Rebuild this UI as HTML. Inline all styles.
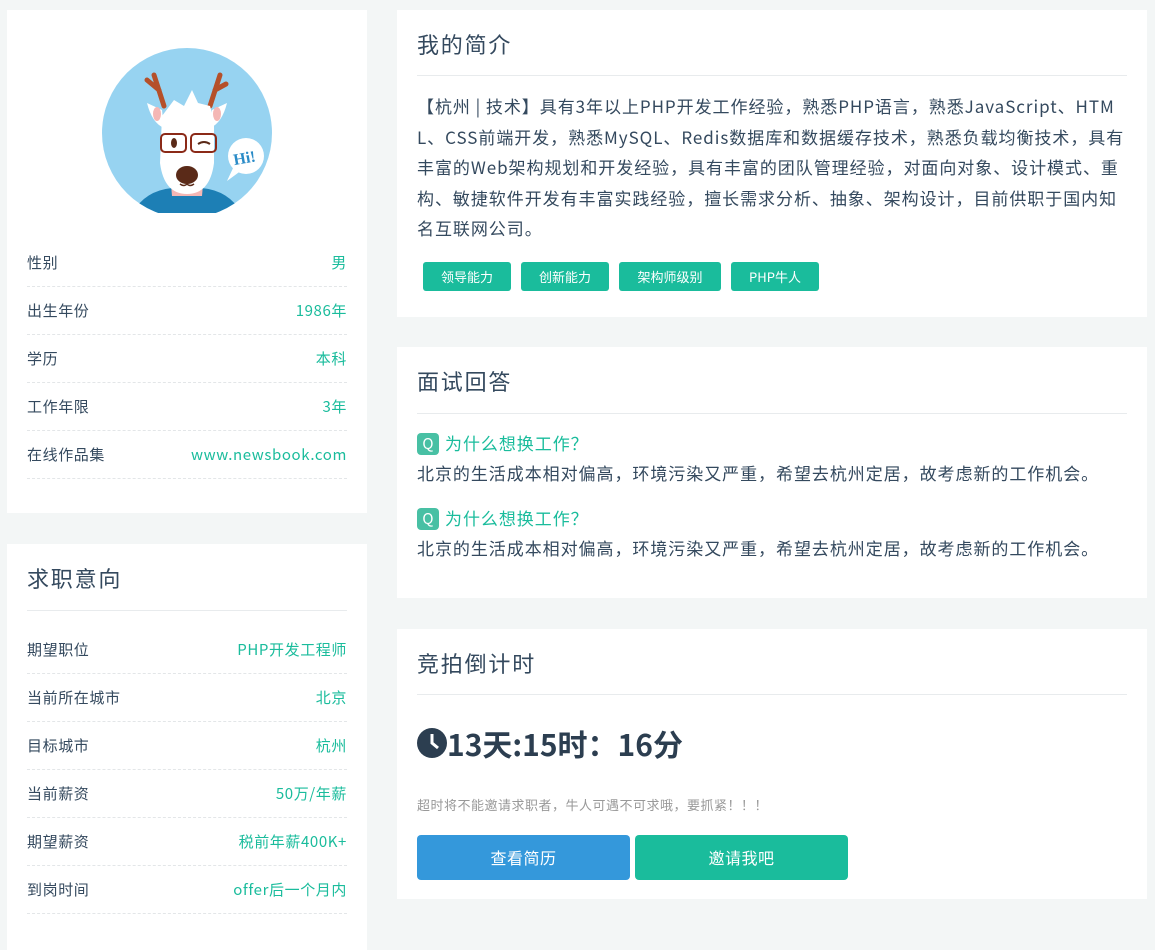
<!DOCTYPE html>
<html><head><meta charset="utf-8"><style>
*{margin:0;padding:0;box-sizing:border-box}
body{width:1155px;height:950px;background:#f3f6f6;font-family:"Noto Sans CJK SC",sans-serif;color:#34495e;position:relative;overflow:hidden}
.card{position:absolute;background:#fff}
.row{position:absolute;left:20px;right:20px;height:48px;border-bottom:1px dashed #e3e6e8;font-size:15px;line-height:48px;display:flex;justify-content:space-between;letter-spacing:0.6px}
.row span:last-child{color:#1abc9c}
.h{position:absolute;left:20px;right:20px;font-size:22px;letter-spacing:1.8px;border-bottom:1px solid #e8ebed}
.tag{display:inline-block;background:#1abc9c;color:#fff;font-size:13px;height:29px;line-height:29px;border-radius:3px;text-align:center;position:absolute;top:252px}
.q{font-size:17px;position:absolute;left:20px;line-height:26px;letter-spacing:0.95px}
.qi{display:inline-block;width:22px;height:22px;background:#48c0a4;color:#fff;border-radius:4px;text-align:center;line-height:22px;font-size:15px;margin-right:6px;vertical-align:1px;letter-spacing:0}
.btn{position:absolute;top:206px;height:45px;line-height:45px;color:#fff;font-size:16px;text-align:center;border-radius:4px;letter-spacing:0.5px}
</style></head><body>
<div class="card" style="left:7px;top:10px;width:360px;height:503px">
<svg style="position:absolute;left:95px;top:38px" width="170" height="165" viewBox="0 0 170 165">
<defs><clipPath id="c"><circle cx="85" cy="85" r="85"/></clipPath></defs>
<circle cx="85" cy="85" r="85" fill="#97d3f1"/>
<g clip-path="url(#c)">
<path d="M28 170 Q40 143 70 140 L100 140 Q130 143 142 170Z" fill="#1d7fb5"/>
<path d="M68 125 L102 125 L100 148 L70 148Z" fill="#f4b7b5"/>
</g>
<path d="M62 58 L52 27 M57 42 L45 32 M108 58 L118 27 M113 42 L124 36" stroke="#b5502a" stroke-width="5" fill="none" stroke-linecap="round"/>
<path d="M60 68 L72 52 L82 58 L90 42 L96 55 L108 58 L112 72 L112 115 Q108 146 85 146 Q62 146 58 115Z" fill="#fff"/>
<path d="M45 55 L60 62 L62 80 Q50 75 45 55Z" fill="#fff"/><path d="M125 55 L110 62 L108 80 Q120 75 125 55Z" fill="#fff"/>
<ellipse cx="55" cy="66" rx="4" ry="7" fill="#f4b7b5"/>
<ellipse cx="115" cy="66" rx="4" ry="7" fill="#f4b7b5"/>
<rect x="59" y="86" width="25" height="18" rx="4" fill="none" stroke="#8b2a18" stroke-width="2"/>
<rect x="89" y="86" width="25" height="18" rx="4" fill="none" stroke="#8b2a18" stroke-width="2"/>
<ellipse cx="72" cy="95" rx="3" ry="5" fill="#5a2a18"/>
<path d="M96 96 Q102 92 108 96" stroke="#5a2a18" stroke-width="2" fill="none"/>
<ellipse cx="85" cy="127" rx="11" ry="9" fill="#5a2a18"/>
<path d="M78 136 Q82 139 85 136 Q88 139 92 136" stroke="#5a2a18" stroke-width="1.5" fill="none"/>
<circle cx="144" cy="108" r="18" fill="#fff"/><path d="M132 118 L125 133 L140 122Z" fill="#fff"/>
<text x="131" y="115" font-family="Liberation Serif" font-weight="bold" font-size="16" fill="#2a8bc7" transform="rotate(-10 144 108)">Hi!</text>
</svg>
<div class="row" style="top:229px"><span>性别</span><span>男</span></div>
<div class="row" style="top:277px"><span>出生年份</span><span>1986年</span></div>
<div class="row" style="top:325px"><span>学历</span><span>本科</span></div>
<div class="row" style="top:373px"><span>工作年限</span><span>3年</span></div>
<div class="row" style="top:421px"><span>在线作品集</span><span>www.newsbook.com</span></div>
</div>
<div class="card" style="left:7px;top:544px;width:360px;height:406px">
<div class="h" style="top:18px;height:49px">求职意向</div>
<div class="row" style="top:82px"><span>期望职位</span><span>PHP开发工程师</span></div>
<div class="row" style="top:130px"><span>当前所在城市</span><span>北京</span></div>
<div class="row" style="top:178px"><span>目标城市</span><span>杭州</span></div>
<div class="row" style="top:226px"><span>当前薪资</span><span>50万/年薪</span></div>
<div class="row" style="top:274px"><span>期望薪资</span><span>税前年薪400K+</span></div>
<div class="row" style="top:322px"><span>到岗时间</span><span>offer后一个月内</span></div>
</div>
<div class="card" style="left:397px;top:10px;width:750px;height:307px">
<div class="h" style="top:18px;height:48px">我的简介</div>
<div style="position:absolute;left:20px;right:18px;top:81px;font-size:17px;line-height:30.5px;word-break:break-all;letter-spacing:0.95px">【杭州 | 技术】具有3年以上PHP开发工作经验，熟悉PHP语言，熟悉JavaScript、HTML、CSS前端开发，熟悉MySQL、Redis数据库和数据缓存技术，熟悉负载均衡技术，具有丰富的Web架构规划和开发经验，具有丰富的团队管理经验，对面向对象、设计模式、重构、敏捷软件开发有丰富实践经验，擅长需求分析、抽象、架构设计，目前供职于国内知名互联网公司。</div>
<span class="tag" style="left:26px;width:88px">领导能力</span>
<span class="tag" style="left:124px;width:88px">创新能力</span>
<span class="tag" style="left:222px;width:102px">架构师级别</span>
<span class="tag" style="left:334px;width:88px">PHP牛人</span>
</div>
<div class="card" style="left:397px;top:347px;width:750px;height:251px">
<div class="h" style="top:18px;height:49px">面试回答</div>
<div class="q" style="top:83px;color:#1abc9c"><span class="qi">Q</span>为什么想换工作？</div>
<div class="q" style="top:113px">北京的生活成本相对偏高，环境污染又严重，希望去杭州定居，故考虑新的工作机会。</div>
<div class="q" style="top:158px;color:#1abc9c"><span class="qi">Q</span>为什么想换工作？</div>
<div class="q" style="top:188px">北京的生活成本相对偏高，环境污染又严重，希望去杭州定居，故考虑新的工作机会。</div>
</div>
<div class="card" style="left:397px;top:629px;width:750px;height:270px">
<div class="h" style="top:18px;height:48px">竞拍倒计时</div>
<div style="position:absolute;left:20px;top:92px;font-size:30px;font-weight:bold;color:#2c3e50;display:flex;align-items:center;line-height:44px">
<svg width="30" height="30" viewBox="0 0 30 30"><circle cx="15" cy="15" r="15" fill="#2c3e50"/><path d="M15 6 V15 L21 20" stroke="#fff" stroke-width="3" fill="none"/></svg>13天:15时：16分</div>
<div style="position:absolute;left:20px;top:166px;font-size:13px;color:#999;letter-spacing:0.5px">超时将不能邀请求职者，牛人可遇不可求哦，要抓紧！！！</div>
<div class="btn" style="left:20px;width:213px;background:#3498db">查看简历</div>
<div class="btn" style="left:238px;width:213px;background:#1abc9c">邀请我吧</div>
</div>
</body></html>
